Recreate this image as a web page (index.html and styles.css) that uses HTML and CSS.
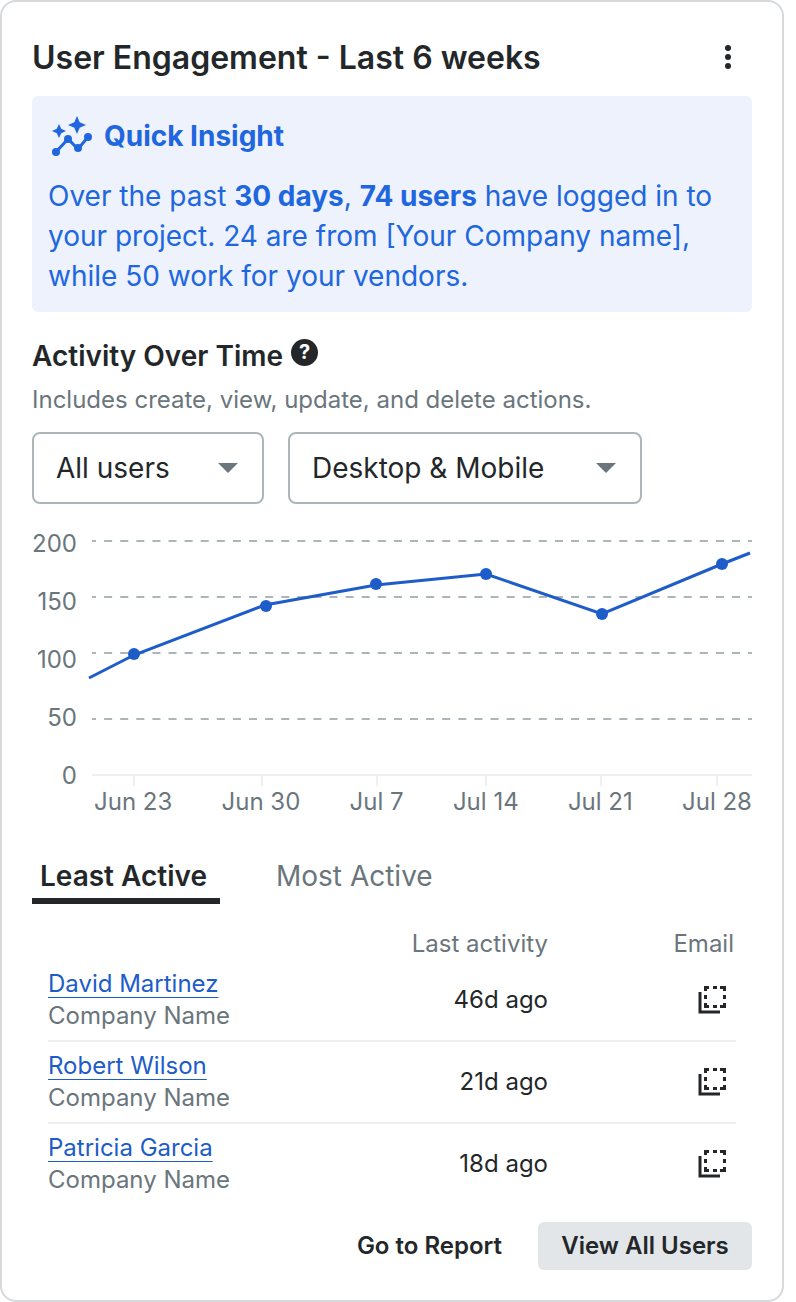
FILE: index.html
```html
<!DOCTYPE html>
<html lang="en">
<head>
<meta charset="utf-8">
<meta name="viewport" content="width=device-width, initial-scale=1">
<title>User Engagement</title>
<link rel="stylesheet" href="styles.css">
</head>
<body>
<svg class="sprite" aria-hidden="true">
  <symbol id="icon-copy" viewBox="0 0 28 28">
    <path d="M2 6V26H22" fill="none" stroke="currentColor" stroke-width="3"/>
    <path fill="currentColor" d="M6 0h5v3H9v2H6zM15 0h4v3h-4zM22 0h6v5h-3V3h-3zM6 9h3v4H6zM25 9h3v4h-3zM6 17h3v2h2v3H6zM15 19h4v3h-4zM25 17h3v5h-6v-3h3z"/>
  </symbol>
</svg>
<main class="card">
  <header class="card-header">
    <h1 class="card-title">User Engagement - Last 6 weeks</h1>
    <button class="icon-button" type="button" aria-label="More options">
      <svg width="48" height="32" viewBox="0 0 48 32" fill="currentColor"><circle cx="24" cy="6" r="3"/><circle cx="24" cy="15" r="3"/><circle cx="24" cy="24" r="3"/></svg>
    </button>
  </header>

  <section class="insight">
    <h2 class="insight-title">
      <svg class="insight-icon" width="48" height="48" viewBox="0 0 48 48" fill="currentColor" aria-hidden="true">
        <path d="M8 40L20 27L30 37L40 25" fill="none" stroke="currentColor" stroke-width="3"/>
        <circle cx="8" cy="40" r="4"/><circle cx="20" cy="27" r="4"/><circle cx="30" cy="36" r="4"/><circle cx="40" cy="25" r="4"/>
        <path d="M29 4L31.700 10.300L38 13L31.700 15.700L29 22L26.300 15.700L20 13L26.300 10.300Z"/>
        <path d="M11 12L13.200 16.800L18 19L13.200 21.200L11 26L8.800 21.200L4 19L8.800 16.800Z"/>
      </svg>
      <span>Quick Insight</span>
    </h2>
    <p class="insight-text">Over the past <strong>30 days</strong>, <strong>74 users</strong> have logged in to your project. 24 are from [Your Company name], while 50 work for your vendors.</p>
  </section>

  <section class="activity">
    <div class="activity-heading">
      <h2 class="section-title">Activity Over Time</h2>
      <button class="help" type="button" aria-label="Help">?</button>
    </div>
    <p class="hint">Includes create, view, update, and delete actions.</p>
    <div class="filters">
      <div class="select select-users">
        <select aria-label="Users"><option>All users</option></select>
        <svg class="caret" width="20" height="10" viewBox="0 0 20 10" aria-hidden="true"><path d="M0 0H20L10 10Z" fill="currentColor"/></svg>
      </div>
      <div class="select select-platform">
        <select aria-label="Platform"><option>Desktop &amp; Mobile</option></select>
        <svg class="caret" width="20" height="10" viewBox="0 0 20 10" aria-hidden="true"><path d="M0 0H20L10 10Z" fill="currentColor"/></svg>
      </div>
    </div>
    <div class="chart">
      <div class="y-axis"><span>200</span><span>150</span><span>100</span><span>50</span><span>0</span></div>
      <svg class="plot" viewBox="0 0 664 258" role="img" aria-label="Activity over time">
        <g class="grid-lines"><path d="M4 13H664"/><path d="M4 69H664"/><path d="M4 125H664"/><path d="M4 191H664"/></g>
        <path class="axis-line" d="M4 247H664M46 247V258M174 247V258M289 247V258M398 247V258M513 247V258M629 247V258"/>
        <polyline class="series" points="1,150 46,127 177,77 288,57 398,46 514,86 634,36 662,25"/>
        <g class="points"><circle cx="46" cy="126" r="6"/><circle cx="178" cy="78" r="6"/><circle cx="288" cy="56" r="6"/><circle cx="398" cy="46" r="6"/><circle cx="514" cy="86" r="6"/><circle cx="634" cy="36" r="6"/></g>
      </svg>
      <div class="x-axis"><span>Jun 23</span><span>Jun 30</span><span>Jul 7</span><span>Jul 14</span><span>Jul 21</span><span>Jul 28</span></div>
    </div>
  </section>

  <div class="tabs" role="tablist">
    <button class="tab tab-active" type="button" role="tab" aria-selected="true">Least Active</button>
    <button class="tab" type="button" role="tab" aria-selected="false">Most Active</button>
  </div>

  <div class="table-wrap">
    <table class="users">
      <thead><tr><th class="col-name" aria-label="User"></th><th class="col-activity">Last activity</th><th class="col-email">Email</th></tr></thead>
      <tbody>
        <tr><td><a href="#">David Martinez</a><div class="company">Company Name</div></td><td class="col-activity">46d ago</td><td class="col-email"><button class="copy" type="button" aria-label="Email David Martinez"><svg width="28" height="28"><use href="#icon-copy"/></svg></button></td></tr>
        <tr><td><a href="#">Robert Wilson</a><div class="company">Company Name</div></td><td class="col-activity">21d ago</td><td class="col-email"><button class="copy" type="button" aria-label="Email Robert Wilson"><svg width="28" height="28"><use href="#icon-copy"/></svg></button></td></tr>
        <tr><td><a href="#">Patricia Garcia</a><div class="company">Company Name</div></td><td class="col-activity">18d ago</td><td class="col-email"><button class="copy" type="button" aria-label="Email Patricia Garcia"><svg width="28" height="28"><use href="#icon-copy"/></svg></button></td></tr>
      </tbody>
    </table>
  </div>

  <footer class="actions">
    <button class="button" type="button">Go to Report</button>
    <button class="button button-filled" type="button">View All Users</button>
  </footer>
</main>
</body>
</html>
```

FILE: styles.css
```css
* { box-sizing: border-box; }
body { margin: 0; background: #fff; color: #232729; font-family: Inter, "Liberation Sans", sans-serif; font-size: 24px; line-height: 32px; font-optical-sizing: none; }
h1, h2, p { margin: 0; }
button, select { font: inherit; color: inherit; }
button { padding: 0; border: 0; background: none; cursor: pointer; }
svg { display: block; }
.sprite { position: absolute; width: 0; height: 0; }

.card { margin-right: 12px; padding: 30px; border: 2px solid #d6dadc; border-radius: 16px; }
.card-header { display: flex; justify-content: space-between; align-items: center; padding: 6px 0 18px; }
.card-title { font-size: 32px; line-height: 40px; font-weight: 600; }
.icon-button { width: 48px; height: 32px; }

.insight { padding: 16px; border-radius: 6px; background: #eef2fd; color: #2066df; }
.insight-title { display: flex; align-items: center; gap: 8px; margin-bottom: 16px; font-size: 28px; line-height: 48px; font-weight: 700; }
.insight-text { font-size: 28px; line-height: 40px; }
.insight-text strong { font-weight: 700; }

.activity { padding-top: 24px; }
.activity-heading { display: flex; align-items: flex-start; gap: 8px; }
.section-title { font-size: 28px; line-height: 40px; font-weight: 600; }
.help { width: 27px; height: 27px; margin-top: 3px; border-radius: 50%; background: #232729; color: #fff; font-size: 20px; line-height: 27px; font-weight: 700; }
.hint { padding: 8px 0 16px; color: #6a767c; }
.filters { display: flex; gap: 24px; }
.select { position: relative; }
.select-users { width: 232px; }
.select-platform { width: 354px; }
.select select { width: 100%; height: 72px; padding: 0 64px 0 22px; border: 2px solid #acb5b9; border-radius: 8px; background: #fff; font-size: 28px; appearance: none; }
.caret { position: absolute; right: 26px; top: 31px; color: #6a767c; pointer-events: none; }

.chart { display: grid; grid-template-columns: 45px 1fr; column-gap: 11px; margin-top: 24px; color: #6a767c; }
.y-axis { grid-row: 1 / 3; display: flex; flex-direction: column; gap: 26px; text-align: right; }
.plot { width: 100%; overflow: visible; }
.grid-lines { fill: none; stroke: #acb5b9; stroke-width: 2; stroke-dasharray: 8.05 8.05; stroke-dashoffset: 4; }
.axis-line { fill: none; stroke: #eeefef; stroke-width: 2; }
.series { fill: none; stroke: #1d5cc9; stroke-width: 3; }
.points { fill: #1d5cc9; }
.x-axis { grid-column: 2; display: flex; justify-content: space-between; padding-left: 6px; }

.tabs { display: flex; gap: 48px; margin-top: 40px; }
.tab { min-width: 188px; padding: 0 8px 4px; border-bottom: 6px solid transparent; color: #6a767c; font-size: 28px; line-height: 36px; text-align: left; }
.tab-active { border-color: #232729; color: #232729; font-weight: 600; }

.table-wrap { padding: 24px 16px 16px; }
.users { width: 100%; border-collapse: separate; border-spacing: 0; table-layout: fixed; }
.users th { height: 32px; padding: 0; color: #6a767c; font-weight: 400; }
.users td { padding: 8px 0; border-bottom: 2px solid #eeefef; vertical-align: middle; }
.users tr:last-child td { border-color: transparent; }
.users a { display: block; width: fit-content; color: #1d5cc9; text-decoration: underline #1d5cc9 from-font; text-underline-offset: 5px; text-decoration-skip-ink: none; }
.company { color: #6a767c; }
.users .col-activity { width: 200px; text-align: right; }
.users .col-email { width: 188px; padding-right: 2px; text-align: right; }
.users td.col-email { padding-right: 10px; }
.copy { display: block; margin-left: auto; }

.actions { display: flex; justify-content: flex-end; gap: 16px; }
.button { padding: 0 20px; border-radius: 6px; font-size: 24px; line-height: 48px; font-weight: 600; }
.button-filled { min-width: 214px; background: #e2e6e8; }
```
